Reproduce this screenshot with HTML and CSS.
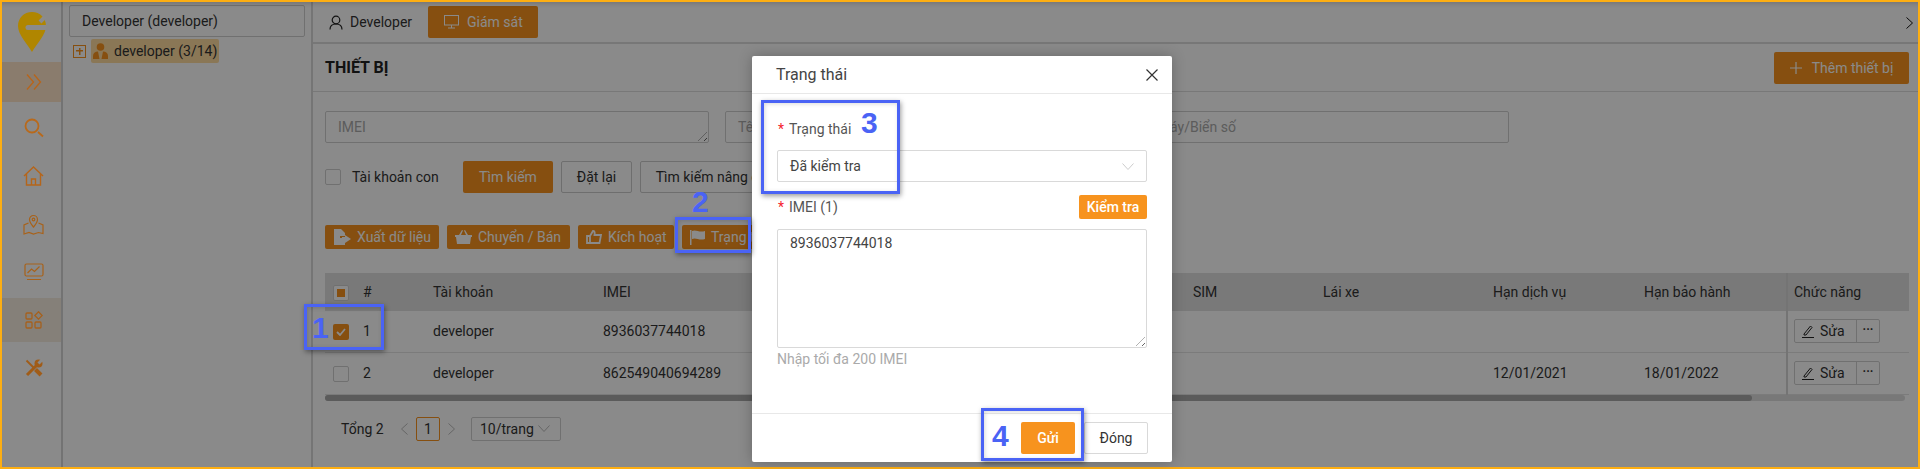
FILE: index.html
```html
<!DOCTYPE html>
<html lang="en">
<head>
    <meta charset="UTF-8">
    <meta name="viewport" content="width=device-width, initial-scale=1.0">
    <title>Thiết bị</title>
    <link rel="stylesheet" href="styles.css">
</head>
<body>

<div class="frame">
    <!-- Icon sidebar -->
    <nav class="sidebar">
        <div class="logo">
            <svg width="28" height="40" viewBox="0 0 28 40">
                <path d="M14 0C6 0 0 6 0 14c0 9 9 17 14 26 5-9 14-17 14-26C28 6 22 0 14 0z" fill="#b08600"/>
                <path d="M28 15.500H10" fill="none" stroke="#8b8b8b" stroke-width="5" stroke-linecap="round"/>
                <path d="M27 5l-5 5" fill="none" stroke="#8b8b8b" stroke-width="4"/>
            </svg>
        </div>
        <div class="nav-item active">
            <svg width="16" height="16" viewBox="0 0 16 16" fill="none" stroke="#b8651a" stroke-width="1.300"><path d="M1 .5l6.500 7.500L1 15.500M8 .5l6.500 7.500L8 15.500"/></svg>
        </div>
        <div class="nav-item nav-search">
            <svg width="20" height="20" viewBox="0 0 20 20" fill="none" stroke="#b9691a" stroke-width="1.800"><circle cx="8" cy="8" r="6.500"/><path d="M14 14l5 4.500"/></svg>
        </div>
        <div class="nav-item">
            <svg width="21" height="20" viewBox="0 0 21 20" fill="none" stroke="#b5651a" stroke-width="1.400"><path d="M1 10l9.500-9 9.500 9M3.500 8v11h14V8M8.500 19v-6h4v6"/></svg>
        </div>
        <div class="nav-item">
            <svg width="21" height="21" viewBox="0 0 21 21" fill="none" stroke="#a8621a" stroke-width="1.200"><path d="M10.500 13C8 10 6.500 8.500 6.500 5.500a4 4 0 0 1 8 0c0 3-1.500 4.500-4 7.500z"/><circle cx="10.500" cy="5.500" r="1.300"/><path d="M5.500 9L1 11v9l5-1.500 4.500 1.500 5-1.500 4.500 1v-8.500L15.500 9"/></svg>
        </div>
        <div class="nav-item">
            <svg width="20" height="18" viewBox="0 0 20 18" fill="none" stroke="#a8621a" stroke-width="1.200"><rect x="1" y="1" width="18" height="12" rx="1.500"/><path d="M3.500 10l4-4 3 2.500 5-5M3 16.500h14"/></svg>
        </div>
        <div class="nav-item nav-apps">
            <svg width="18" height="18" viewBox="0 0 18 18" fill="none" stroke="#a6601c" stroke-width="1.300"><rect x="1" y="2" width="6" height="6" rx="1"/><rect x="1" y="11" width="6" height="6" rx="1"/><rect x="10" y="11" width="6" height="6" rx="1"/><path d="M13.500 .8l3.700 3.700-3.700 3.700-3.700-3.700z"/></svg>
        </div>
        <div class="nav-item nav-tools">
            <svg width="18" height="18" viewBox="0 0 18 18" fill="none" stroke="#a05c18">
                <path d="M1.500 1.500L9 9" stroke-width="1.800"/>
                <path d="M10.500 10.500L16 16" stroke-width="4"/>
                <path d="M2 16L11 7" stroke-width="3"/>
                <circle cx="13.500" cy="4.500" r="4" fill="#a05c18" stroke="none"/>
                <path d="M13.500 4.500L17 1" stroke="#8b8b8b" stroke-width="3"/>
            </svg>
        </div>
    </nav>

    <!-- Account tree -->
    <aside class="tree">
        <div class="tree-search">Developer (developer)</div>
        <div class="tree-row">
            <span class="tree-toggle"></span>
            <span class="tree-node">
                <svg width="15" height="16" viewBox="0 0 15 16" fill="#f7931e"><circle cx="7.500" cy="4" r="3.800"/><path d="M0 16v-3c0-3 2-4.500 5-4.500l1.500 7.500h2L10 8.500c3 0 5 1.500 5 4.500v3z"/></svg>
                developer (3/14)
            </span>
        </div>
    </aside>

    <main class="main">
        <div class="tabs">
            <div class="tab">
                <svg width="14" height="15" viewBox="0 0 14 15" fill="none" stroke="#222" stroke-width="1.200"><circle cx="7" cy="5" r="3.800"/><path d="M1 14.500c0-3.500 2.500-5.500 6-5.500s6 2 6 5.500"/></svg>
                Developer
            </div>
            <div class="tab tab-active">
                <svg width="15" height="14" viewBox="0 0 15 14" fill="none" stroke="#fff" stroke-width="1"><rect x=".5" y=".5" width="14" height="9.500"/><path d="M7.500 10v3M4 13h7"/></svg>
                Giám sát
            </div>
            <svg class="tab-next" width="7" height="12" viewBox="0 0 7 12" fill="none" stroke="#111" stroke-width="1"><path d="M.5 .5L6.500 6 .5 11.500"/></svg>
        </div>

        <div class="page-head">
            <h1>THIẾT BỊ</h1>
            <button class="btn btn-orange btn-add">
                <svg width="12" height="12" viewBox="0 0 12 12" stroke="#fff" stroke-width="1.200"><path d="M6 0v12M0 6h12"/></svg>
                Thêm thiết bị
            </button>
        </div>

        <div class="filters">
            <div class="field">IMEI<span class="grip"></span></div>
            <div class="field">Tên</div>
            <div class="field">Số máy/Biển số</div>
        </div>

        <div class="search-row">
            <span class="check"></span>
            <span class="check-label">Tài khoản con</span>
            <button class="btn btn-orange btn-search">Tìm kiếm</button>
            <button class="btn btn-reset">Đặt lại</button>
            <button class="btn btn-advanced">Tìm kiếm nâng cao</button>
        </div>

        <div class="actions">
            <button class="btn btn-orange btn-action act-export">
                <svg width="18" height="16" viewBox="0 0 18 16" fill="#fff"><path d="M1 0h7l4 4v3H7v2h5v7H1z"/><path d="M12 6l6 4-6 4v-2H9V8h3z"/></svg>
                Xuất dữ liệu
            </button>
            <button class="btn btn-orange btn-action act-move">
                <svg width="17" height="14" viewBox="0 0 17 14" fill="#fff"><path d="M0 5h17v2h-1l-1 7H2L1 7H0zM4 5l3-5 1 .5L6 5zM13 5l-3-5-1 .5 2 4.500z"/></svg>
                Chuyển / Bán
            </button>
            <button class="btn btn-orange btn-action act-activate">
                <svg width="16" height="14" viewBox="0 0 16 14" fill="none" stroke="#fff" stroke-width="1.800"><path d="M1 6h3v7H1zM4 6l3-5c1.500 0 2 1 1.500 4H15l-1.500 8H4"/></svg>
                Kích hoạt
            </button>
            <button class="btn btn-orange btn-action act-status">
                <svg width="15" height="15" viewBox="0 0 15 15" fill="#fff"><path d="M0 0h1.500v15H0zM2 1c4-2 7 2 13 0v8c-6 2-9-2-13 0z"/></svg>
                Trạng thái
            </button>
        </div>

        <div class="table-wrap">
            <table class="devices">
                <colgroup>
                    <col class="c-check"><col class="c-num"><col class="c-user"><col class="c-imei"><col class="c-sim"><col class="c-driver"><col class="c-date"><col class="c-date"><col class="c-fn">
                </colgroup>
                <thead>
                    <tr>
                        <th><span class="check check-some"></span></th>
                        <th>#</th><th>Tài khoản</th><th>IMEI</th><th>SIM</th><th>Lái xe</th><th>Hạn dịch vụ</th><th>Hạn bảo hành</th><th class="fixed">Chức năng</th>
                    </tr>
                </thead>
                <tbody>
                    <tr class="row-one">
                        <td><span class="check check-on">
                            <svg width="10" height="8" viewBox="0 0 10 8" fill="none" stroke="#fff" stroke-width="1.800"><path d="M1 4l3 3 5-6"/></svg>
                        </span></td>
                        <td>1</td><td>developer</td><td>8936037744018</td><td></td><td></td><td></td><td></td>
                        <td class="fixed">
                            <div class="row-btns">
                                <span class="row-edit">
                                    <svg width="12" height="13" viewBox="0 0 12 13" fill="none" stroke="#222"><path d="M2 9L8.500 1 10 2.500 4 10H2zM0 12.500h12"/></svg>
                                    Sửa
                                </span>
                                <span class="row-more">···</span>
                            </div>
                        </td>
                    </tr>
                    <tr class="row-two">
                        <td><span class="check"></span></td>
                        <td>2</td><td>developer</td><td>862549040694289</td><td></td><td></td><td>12/01/2021</td><td>18/01/2022</td>
                        <td class="fixed">
                            <div class="row-btns">
                                <span class="row-edit">
                                    <svg width="12" height="13" viewBox="0 0 12 13" fill="none" stroke="#222"><path d="M2 9L8.500 1 10 2.500 4 10H2zM0 12.500h12"/></svg>
                                    Sửa
                                </span>
                                <span class="row-more">···</span>
                            </div>
                        </td>
                    </tr>
                </tbody>
            </table>
            <div class="scroll-track"><div class="scroll-thumb"></div></div>
        </div>

        <div class="pager">
            <span class="pager-total">Tổng 2</span>
            <svg width="7" height="12" viewBox="0 0 7 12" fill="none" stroke="#bbb"><path d="M6.500 .5L.5 6l6 5.500"/></svg>
            <span class="pager-page">1</span>
            <svg width="7" height="12" viewBox="0 0 7 12" fill="none" stroke="#bbb"><path d="M.5 .5l6 5.500-6 5.500"/></svg>
            <span class="pager-size">10/trang
                <svg width="12" height="7" viewBox="0 0 12 7" fill="none" stroke="#bbb"><path d="M.5 .5L6 6.500 11.500 .5"/></svg>
            </span>
        </div>
    </main>
</div>

<div class="overlay"></div>

<!-- Status modal -->
<div class="modal">
    <div class="modal-head">
        <span>Trạng thái</span>
        <svg width="12" height="12" viewBox="0 0 12 12" stroke="#333" stroke-width="1.200"><path d="M.5 .5l11 11M11.500 .5l-11 11"/></svg>
    </div>
    <div class="modal-body">
        <div class="form-label"><i>*</i>Trạng thái</div>
        <div class="select-box">Đã kiểm tra
            <svg width="12" height="7" viewBox="0 0 12 7" fill="none" stroke="#ccc"><path d="M.5 .5L6 6.500 11.500 .5"/></svg>
        </div>
        <div class="imei-head">
            <div class="form-label"><i>*</i>IMEI (1)</div>
            <button class="btn-check">Kiểm tra</button>
        </div>
        <div class="imei-area">8936037744018<span class="grip"></span></div>
        <div class="hint">Nhập tối đa 200 IMEI</div>
    </div>
    <div class="modal-foot">
        <button class="btn-send">Gửi</button>
        <button class="btn-close">Đóng</button>
    </div>
</div>

<!-- Tutorial marks drawn on top of the screenshot -->
<div class="mark mark-1"></div><span class="mark-num num-1">1</span>
<div class="mark mark-2"></div><span class="mark-num num-2">2</span>
<div class="mark mark-3"></div><span class="mark-num num-3">3</span>
<div class="mark mark-4"></div><span class="mark-num num-4">4</span>

</body>
</html>
```

FILE: styles.css
```css
* {
    box-sizing: border-box;
}
body {
    margin: 0;
    height: 469px;
    overflow: hidden;
    font-family: Roboto, Arial, sans-serif;
    font-size: 14px;
    color: #333;
    background-color: #fff;
}
button {
    font-family: inherit;
}
.frame {
    display: flex;
    height: 469px;
}
.overlay {
    position: absolute;
    top: 0;
    left: 0;
    right: 0;
    bottom: 0;
    background-color: rgba(0, 0, 0, 0.46);
    z-index: 10;
    box-shadow: inset 0 0 0 2px #fdae12, inset 0 5px 4px -1px rgba(0, 0, 0, 0.14);
}

/* Sidebar */
.sidebar {
    flex: 0 0 61px;
    margin: 2px 0 2px 2px;
    border-right: 2px solid #d4d4d4;
    display: flex;
    flex-direction: column;
}
.logo {
    height: 60px;
    padding: 10px 0 0 16px;
    position: relative;
    z-index: 20;
}
.nav-item {
    height: 48px;
    display: flex;
    align-items: center;
    justify-content: center;
    padding-left: 4px;
}
.nav-item svg {
    position: relative;
    z-index: 20;
}
.nav-item.active {
    height: 40px;
    background-color: #ffe6ca;
}
.nav-search {
    margin-top: 2px;
}
.nav-apps {
    height: 44px;
    margin-top: 2px;
    background-color: #f5ecdf;
}
.nav-tools {
    margin-top: 2px;
}

/* Tree */
.tree {
    flex: 0 0 250px;
    padding: 5px 6px 0 6px;
    border-right: 2px solid #d8d8d8;
}
.tree-search {
    height: 32px;
    line-height: 30px;
    padding-left: 12px;
    border: 1px solid #d0d0d0;
    border-radius: 2px;
}
.tree-row {
    display: flex;
    align-items: center;
    margin-top: 2px;
}
.tree-toggle {
    width: 13px;
    height: 13px;
    margin: 0 5px 0 4px;
    border: 1px solid #f7931e;
    background: linear-gradient(#f7931e, #f7931e) center / 7px 1.500px no-repeat, linear-gradient(#f7931e, #f7931e) center / 1.500px 7px no-repeat;
}
.tree-node {
    display: flex;
    align-items: center;
    gap: 6px;
    height: 24px;
    padding: 0 2px;
    background-color: #ffdca0;
    border-radius: 2px;
}

/* Main */
.main {
    flex: 1;
    min-width: 0;
    margin-top: 2px;
    padding: 0 11px 0 12px;
}
.tabs {
    display: flex;
    align-items: flex-start;
    height: 42px;
    margin: 0 -11px 0 -12px;
    padding: 4px 7px 0 8px;
    border-bottom: 2px solid #dcdcdc;
}
.tab {
    display: flex;
    align-items: center;
    gap: 7px;
    height: 32px;
    padding: 0 12px 0 8px;
    margin-right: 4px;
    border-radius: 2px;
}
.tab-active {
    width: 110px;
    padding-left: 16px;
    gap: 8px;
    background-color: #f7931e;
    color: #fff;
}
.tab-next {
    margin: 11px 0 0 auto;
}
.page-head {
    display: flex;
    align-items: center;
    justify-content: space-between;
    height: 48px;
    margin: 0 -11px 0 -12px;
    padding: 0 11px 0 12px;
    border-bottom: 1px solid #dedede;
}
.page-head h1 {
    margin: 0;
    font-size: 16px;
    font-weight: 700;
    color: #222;
}
.btn {
    height: 32px;
    border-radius: 2px;
    border: 1px solid #ccc;
    background-color: #fff;
    color: #333;
    font-size: 14px;
    padding: 0;
}
.btn-orange {
    border: 0;
    background-color: #f7931e;
    color: #fff;
}
.btn-add {
    display: flex;
    align-items: center;
    justify-content: center;
    gap: 10px;
    width: 135px;
}
.filters {
    display: flex;
    gap: 16px;
    margin-top: 19px;
}
.field {
    position: relative;
    width: 384px;
    height: 32px;
    line-height: 30px;
    padding-left: 12px;
    border: 1px solid #d0d0d0;
    border-radius: 2px;
    color: #aaa;
}
.grip {
    position: absolute;
    right: 1px;
    bottom: 1px;
    width: 9px;
    height: 9px;
    background: repeating-linear-gradient(135deg, transparent 0 2px, #666 2px 3px, transparent 3px 4px);
    clip-path: polygon(100% 0, 100% 100%, 0 100%);
}
.search-row {
    display: flex;
    align-items: center;
    margin-top: 18px;
}
.check {
    display: inline-flex;
    align-items: center;
    justify-content: center;
    width: 16px;
    height: 16px;
    background-color: #fff;
    border: 1px solid #cfcfcf;
    border-radius: 2px;
    vertical-align: middle;
}
.check-label {
    margin-left: 11px;
    width: 111px;
}
.btn-search {
    width: 90px;
}
.btn-reset {
    width: 71px;
    margin-left: 8px;
}
.btn-advanced {
    width: 150px;
    margin-left: 8px;
}
.actions {
    display: flex;
    gap: 8px;
    margin-top: 32px;
}
.btn-action {
    display: flex;
    align-items: center;
    height: 24px;
    gap: 6px;
    padding-left: 8px;
    white-space: nowrap;
    flex-shrink: 0;
}
.act-export {
    width: 114px;
}
.act-move {
    width: 123px;
}
.act-activate {
    width: 96px;
}
.act-status {
    width: 110px;
}

/* Table */
.table-wrap {
    margin-top: 24px;
}
.devices {
    table-layout: fixed;
    width: 1584px;
    border-collapse: collapse;
}
.c-check {
    width: 30px;
}
.c-num {
    width: 70px;
}
.c-user {
    width: 170px;
}
.c-imei {
    width: 590px;
}
.c-sim {
    width: 130px;
}
.c-driver {
    width: 170px;
}
.c-date {
    width: 151px;
}
.c-fn {
    width: 122px;
}
.devices th,
.devices td {
    padding: 0 8px;
    text-align: left;
    font-weight: 400;
    white-space: nowrap;
}
.devices th {
    height: 38px;
    background-color: #e0e0e0;
}
.devices td {
    border-bottom: 1px solid #e4e4e4;
}
.row-one td {
    height: 41px;
}
.row-two td {
    height: 42px;
}
.devices .fixed {
    padding-left: 6px;
    border-left: 2px solid #d6d6d6;
}
.check-some {
    background: linear-gradient(#f7931e, #f7931e) center / 8px 8px no-repeat #fff;
}
.check-on {
    border: 0;
    background-color: #f7931e;
}
.row-btns {
    display: inline-flex;
    align-items: stretch;
    width: 86px;
    height: 24px;
    border: 1px solid #d0d0d0;
    border-radius: 2px;
}
.row-edit {
    display: flex;
    align-items: center;
    gap: 6px;
    width: 62px;
    padding-left: 7px;
    border-right: 1px solid #d0d0d0;
}
.row-more {
    flex: 1;
    text-align: center;
    line-height: 20px;
    font-size: 12px;
    font-weight: 700;
}
.scroll-track {
    width: 1580px;
    height: 6px;
    background-color: #dedede;
    border-radius: 3px;
}
.scroll-thumb {
    width: 1427px;
    height: 6px;
    background-color: #a8a8a8;
    border-radius: 3px;
}

/* Pagination */
.pager {
    display: flex;
    align-items: center;
    margin-top: 16px;
    padding-left: 16px;
}
.pager-total {
    width: 60px;
}
.pager-page {
    width: 24px;
    height: 24px;
    line-height: 22px;
    margin: 0 8px;
    text-align: center;
    border: 1px solid #f7931e;
    border-radius: 2px;
}
.pager-size {
    display: flex;
    align-items: center;
    justify-content: space-between;
    width: 90px;
    height: 24px;
    margin-left: 16px;
    padding: 0 10px 0 8px;
    border: 1px solid #d0d0d0;
    border-radius: 2px;
}

/* Modal */
.modal {
    position: absolute;
    left: 752px;
    top: 56px;
    width: 420px;
    height: 406px;
    display: flex;
    flex-direction: column;
    background-color: #fff;
    border-radius: 2px;
    z-index: 30;
    box-shadow: 0 0 14px rgba(0, 0, 0, 0.25);
}
.modal-head {
    display: flex;
    align-items: center;
    justify-content: space-between;
    height: 38px;
    padding: 0 14px 0 24px;
    font-size: 16px;
    color: #444;
    border-bottom: 1px solid #e8e8e8;
}
.modal-body {
    flex: 1;
    padding: 26px 25px 0 25px;
}
.form-label {
    line-height: 18px;
    color: #555;
}
.form-label i {
    font-style: normal;
    color: #f5222d;
    margin: 0 5px 0 1px;
}
.select-box {
    display: flex;
    align-items: center;
    justify-content: space-between;
    height: 32px;
    margin-top: 12px;
    padding: 0 12px;
    color: #444;
    border: 1px solid #d9d9d9;
    border-radius: 2px;
}
.imei-head {
    display: flex;
    align-items: center;
    justify-content: space-between;
    margin-top: 13px;
}
.btn-check {
    width: 68px;
    height: 24px;
    padding: 0;
    border: 0;
    border-radius: 2px;
    background-color: #f7931e;
    color: #fff;
    font-size: 14px;
    font-weight: 500;
}
.imei-area {
    position: relative;
    height: 119px;
    margin-top: 10px;
    padding: 3px 12px;
    line-height: 20px;
    color: #444;
    border: 1px solid #d9d9d9;
    border-radius: 2px;
}
.hint {
    margin-top: 2px;
    line-height: 18px;
    color: #aaa;
}
.modal-foot {
    display: flex;
    justify-content: flex-end;
    gap: 9px;
    height: 49px;
    padding: 8px 24px 0 0;
    border-top: 1px solid #e8e8e8;
}
.btn-send {
    width: 54px;
    height: 32px;
    padding: 0;
    border: 0;
    border-radius: 2px;
    background-color: #f7931e;
    color: #fff;
    font-size: 14px;
    font-weight: 500;
}
.btn-close {
    width: 64px;
    height: 32px;
    padding: 0;
    border: 1px solid #d9d9d9;
    border-radius: 2px;
    background-color: #fff;
    color: #333;
    font-size: 14px;
}

/* Blue tutorial marks */
.mark {
    position: absolute;
    border: 3px solid #4a63f5;
    z-index: 40;
    box-shadow: 1px 2px 5px rgba(0, 0, 0, 0.4), inset 1px 1px 4px rgba(0, 0, 0, 0.15);
}
.mark-1 {
    left: 304px;
    top: 304px;
    width: 80px;
    height: 46px;
}
.mark-2 {
    left: 675px;
    top: 217px;
    width: 76px;
    height: 36px;
}
.mark-3 {
    left: 761px;
    top: 100px;
    width: 139px;
    height: 94px;
}
.mark-4 {
    left: 981px;
    top: 408px;
    width: 103px;
    height: 53px;
}
.mark-num {
    position: absolute;
    font-family: "Liberation Sans", Arial, sans-serif;
    font-size: 30px;
    line-height: 30px;
    font-weight: 700;
    color: #4a63f5;
    z-index: 41;
}
.num-1 {
    left: 312px;
    top: 313px;
}
.num-2 {
    left: 692px;
    top: 187px;
}
.num-3 {
    left: 861px;
    top: 108px;
}
.num-4 {
    left: 992px;
    top: 421px;
}
```
